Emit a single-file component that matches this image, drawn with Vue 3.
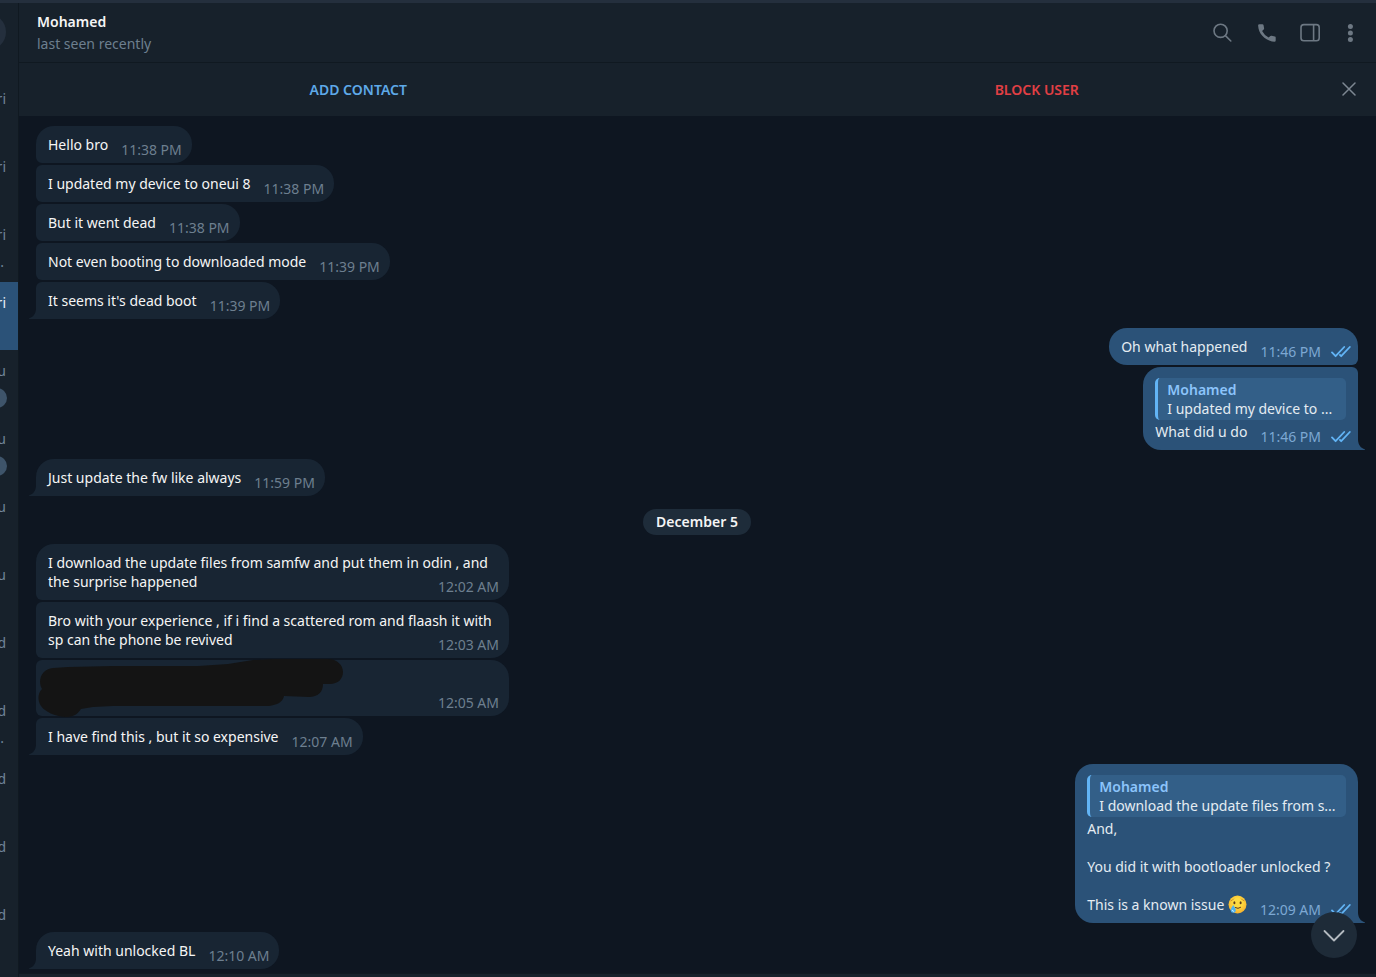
<template>
  <div class="app">
    <aside class="sidebar">
      <div class="sidebar-top">
        <span class="menu-circle"></span>
      </div>
      <div
        v-for="(chat, i) in chats"
        :key="i"
        class="chat-row"
        :class="{ active: chat.active }"
      >
        <span class="chat-day">{{ chat.day }}</span>
        <span v-if="chat.badge" class="chat-badge"></span>
        <span v-else class="chat-preview">{{ chat.preview }}</span>
      </div>
    </aside>

    <main class="chat">
      <header class="header">
        <div class="peer">
          <h1 class="peer-name">Mohamed</h1>
          <p class="peer-status">last seen recently</p>
        </div>
        <div class="tools">
          <button class="icon-btn" aria-label="Search">
            <svg width="20" height="20" viewBox="0 0 20 20" fill="none" stroke="currentColor" stroke-width="1.6" stroke-linecap="round">
              <circle cx="8.6" cy="7.8" r="6.6" />
              <path d="M13.4 12.6L18.8 18" />
            </svg>
          </button>
          <button class="icon-btn" aria-label="Call">
            <svg width="20" height="20" viewBox="-1 0 20 20" fill="currentColor">
              <path d="M2.4 1.2H5.4Q6.3 1.2 6.5 2.1L7.1 5.2Q7.2 5.9 6.7 6.4L5.1 8.1Q7.2 12.2 11.6 14.6L13.4 13Q13.9 12.5 14.6 12.7L17.9 13.5Q18.7 13.7 18.7 14.6V17.4Q18.7 18.7 17.4 18.7C8.6 18.3 1.6 11.4 1.1 2.6Q1.1 1.2 2.4 1.2Z" />
            </svg>
          </button>
          <button class="icon-btn" aria-label="Toggle info panel">
            <svg width="20" height="20" viewBox="0 0 20 20" fill="none" stroke="currentColor" stroke-width="1.6">
              <rect x="1" y="1.6" width="18.2" height="16.2" rx="2.8" />
              <path d="M13.6 1.6V17.8" />
            </svg>
          </button>
          <button class="icon-btn" aria-label="More">
            <svg width="20" height="20" viewBox="0 0 20 20" fill="currentColor">
              <circle cx="10.4" cy="3.4" r="2.5" />
              <circle cx="10.4" cy="10" r="2.5" />
              <circle cx="10.4" cy="16.6" r="2.5" />
            </svg>
          </button>
        </div>
      </header>

      <div class="contact-bar">
        <button class="bar-btn add">ADD CONTACT</button>
        <button class="bar-btn block">BLOCK USER</button>
        <button class="bar-close" aria-label="Close">
          <svg width="14" height="14" viewBox="0 0 14 14" fill="none" stroke="currentColor" stroke-width="1.5" stroke-linecap="round">
            <path d="M1 1L13 13M13 1L1 13" />
          </svg>
        </button>
      </div>

      <section class="history">
        <template v-for="(group, g) in groups" :key="g">
          <div v-if="group.date" class="date">{{ group.date }}</div>
          <div v-else class="group" :class="group.out ? 'out' : 'in'">
            <div v-for="(msg, m) in group.messages" :key="m" class="bubble">
              <div v-if="msg.reply" class="reply">
                <strong class="reply-name">Mohamed</strong>
                <span class="reply-text">{{ msg.reply }}</span>
              </div>
              <div v-if="msg.hidden" class="hidden-text">
                <svg class="scribble" width="306" height="58" viewBox="0 0 306 58" fill="#141414">
                  <path d="M15 9L30 8L75 7H160L190 5L215 1L235 0H290C299 0 305 6 305 13C305 20 300 25 292 25H285C285 33 280 38 271 38L246 37C245 43 239 46 231 47H195L75 47L55 48L43 50C39 56 35 58 27 58C17 57 7 53 3 47C-1 41 0 34 4 30C-1 21 4 10 15 9Z" />
                </svg>
              </div>
              <span class="text">{{ msg.text }}</span>
              <svg v-if="msg.emoji" class="emoji" width="19" height="19" viewBox="0 0 19 19" role="img" aria-label="Smiling face with tear">
                <defs>
                  <radialGradient id="face" cx="0.5" cy="0.4" r="0.6">
                    <stop offset="0.4" stop-color="#fedb41" />
                    <stop offset="1" stop-color="#f7b02c" />
                  </radialGradient>
                </defs>
                <circle cx="9.5" cy="9.5" r="9" fill="url(#face)" />
                <path d="M3 5.8Q4.6 5.4 5.6 4M13.4 4Q14.4 5.4 16 5.8" fill="none" stroke="#b8782a" stroke-width="0.7" stroke-linecap="round" />
                <ellipse cx="6.4" cy="7.7" rx="1" ry="1.5" fill="#5c3a1c" />
                <ellipse cx="12.6" cy="7.7" rx="1" ry="1.5" fill="#5c3a1c" />
                <path d="M7.4 12.6Q10 14.4 12.6 12.4" fill="none" stroke="#5c3a1c" stroke-width="1" stroke-linecap="round" />
                <path d="M5.2 10C6.2 12 7.8 13.2 7.8 15.2A2.5 2.5 0 0 1 2.8 15.2C2.8 13.2 4.4 12 5.2 10Z" fill="#4fb3f2" />
                <path d="M4.2 15.2Q4.4 16.4 5.6 16.4" fill="none" stroke="#d6f1ff" stroke-width="0.9" stroke-linecap="round" />
              </svg>
              <span class="meta">
                <time>{{ msg.time }}</time>
                <svg v-if="group.out" class="checks" width="20" height="12" viewBox="0 0 20 12" fill="none" stroke="currentColor" stroke-width="1.8" stroke-linecap="round" stroke-linejoin="round">
                  <path d="M1 6.4L4.6 10.2L13.2 1" />
                  <path d="M9 9L10.2 10.2L18.8 1" />
                </svg>
              </span>
              <svg v-if="m === group.messages.length - 1" class="tail" width="7" height="10" viewBox="0 0 7 10">
                <path d="M7 0V10H0V9.4C4.4 8 6.6 5 7 0Z" fill="currentColor" />
              </svg>
            </div>
          </div>
        </template>

        <button class="scroll-down" aria-label="Scroll to bottom">
          <svg width="22" height="13" viewBox="0 0 22 13" fill="none" stroke="currentColor" stroke-width="1.8" stroke-linecap="round" stroke-linejoin="round">
            <path d="M1.5 2L11 11.5L20.5 2" />
          </svg>
        </button>
      </section>

      <footer class="composer"></footer>
    </main>
  </div>
</template>

<script setup>
const chats = [
  { day: 'ri' },
  { day: 'ri' },
  { day: 'ri', preview: '.' },
  { day: 'ri', active: true },
  { day: 'u', badge: true },
  { day: 'u', badge: true },
  { day: 'u' },
  { day: 'u' },
  { day: 'd' },
  { day: 'd', preview: '.' },
  { day: 'd' },
  { day: 'd' },
  { day: 'd' }
]

const groups = [
  {
    messages: [
      { text: 'Hello bro', time: '11:38 PM' },
      { text: 'I updated my device to oneui 8', time: '11:38 PM' },
      { text: 'But it went dead', time: '11:38 PM' },
      { text: 'Not even booting to downloaded mode', time: '11:39 PM' },
      { text: "It seems it's dead boot", time: '11:39 PM' }
    ]
  },
  {
    out: true,
    messages: [
      { text: 'Oh what happened', time: '11:46 PM' },
      { reply: 'I updated my device to ...', text: 'What did u do', time: '11:46 PM' }
    ]
  },
  { messages: [{ text: 'Just update the fw like always', time: '11:59 PM' }] },
  { date: 'December 5' },
  {
    messages: [
      {
        text: 'I download the update files from samfw and put them in odin , and the surprise happened',
        time: '12:02 AM'
      },
      {
        text: 'Bro with your experience , if i find a scattered rom and flaash it with sp can the phone be revived',
        time: '12:03 AM'
      },
      { hidden: true, time: '12:05 AM' },
      { text: 'I have find this , but it so expensive', time: '12:07 AM' }
    ]
  },
  {
    out: true,
    messages: [
      {
        reply: 'I download the update files from s...',
        text: 'And,\n\nYou did it with bootloader unlocked ?\n\nThis is a known issue ',
        emoji: true,
        time: '12:09 AM'
      }
    ]
  },
  { messages: [{ text: 'Yeah with unlocked BL', time: '12:10 AM' }] }
]
</script>

<style>
body {
  margin: 0;
  background: #0e1621;
}
</style>

<style scoped>
.app {
  display: flex;
  box-sizing: border-box;
  min-height: 100vh;
  border-top: 3px solid #242f3d;
  background: #17212b;
  color: #f5f5f5;
  font-family: "Noto Sans", sans-serif;
  font-size: 14px;
  line-height: 19px;
}
button {
  border: 0;
  padding: 0;
  background: none;
  font: inherit;
  cursor: pointer;
}

/* sidebar */
.sidebar {
  flex: none;
  width: 18px;
  overflow: hidden;
}
.sidebar-top {
  display: flex;
  align-items: center;
  justify-content: flex-end;
  box-sizing: border-box;
  height: 75px;
  padding: 0 12px 17px 0;
}
.menu-circle {
  flex: none;
  width: 36px;
  height: 36px;
  border-radius: 50%;
  background: #242f3d;
}
.chat-row {
  display: flex;
  flex-direction: column;
  align-items: flex-end;
  gap: 8px;
  box-sizing: border-box;
  height: 68px;
  padding: 11px 12px 0 0;
  color: #708499;
}
.chat-row.active {
  background: #2b5278;
  color: #e9f1f8;
}
.chat-badge {
  width: 22px;
  height: 20px;
  margin-right: -1px;
  border-radius: 10px;
  background: #3e546a;
}
.chat-preview {
  margin-right: 2px;
}

/* header */
.chat {
  display: flex;
  flex: 1;
  flex-direction: column;
  min-width: 0;
  border-left: 1px solid #101921;
}
.header {
  display: flex;
  align-items: center;
  justify-content: space-between;
  height: 59px;
  padding: 0 16px 0 18px;
  border-bottom: 1px solid #101921;
}
.peer-name {
  margin: 0 0 3px;
  font-size: 14px;
  font-weight: 600;
}
.peer-status {
  margin: 0;
  color: #6d7f8f;
}
.tools {
  display: flex;
  align-items: center;
  gap: 24px;
}
.icon-btn {
  display: flex;
  color: #6d7883;
}
.icon-btn:last-child {
  margin-left: -4px;
}
.contact-bar {
  position: relative;
  display: flex;
  height: 53px;
}
.bar-btn {
  flex: 1;
  font-weight: 600;
}
.bar-btn.add {
  color: #5ea9e8;
}
.bar-btn.block {
  color: #e13f44;
}
.bar-close {
  position: absolute;
  top: 0;
  right: 20px;
  display: flex;
  align-items: center;
  height: 52px;
  color: #7d8792;
}

/* messages */
.history {
  position: relative;
  display: flex;
  flex: 1;
  flex-direction: column;
  gap: 9px;
  padding: 10px 18px 4px 17px;
  background: #0e1621;
}
.group {
  display: flex;
  flex-direction: column;
  align-items: flex-start;
  gap: 2px;
}
.group.out {
  align-items: flex-end;
}
.bubble {
  position: relative;
  display: flow-root;
  box-sizing: border-box;
  max-width: 473px;
  padding: 9px 12px;
  border-radius: 6px 18px 18px 6px;
  background: #182533;
}
.bubble:first-child {
  border-top-left-radius: 18px;
}
.bubble:last-child {
  border-bottom-left-radius: 0;
}
.out .bubble {
  border-radius: 18px 6px 6px 18px;
  background: #2b5278;
  color: #e4ecf2;
}
.out .bubble:first-child {
  border-top-right-radius: 18px;
}
.out .bubble:last-child {
  border-bottom-right-radius: 0;
}
.text {
  white-space: pre-wrap;
}
.meta {
  display: flex;
  float: right;
  align-items: center;
  gap: 10px;
  margin: 5px -2px -5px 13px;
  color: #6d7f8f;
  white-space: nowrap;
}
.out .meta {
  margin-right: -5px;
  color: #7da8d3;
}
.checks {
  color: #62b4f5;
}
.tail {
  position: absolute;
  bottom: 0;
  left: -7px;
  color: #182533;
}
.out .tail {
  right: -7px;
  left: auto;
  color: #2b5278;
  transform: scaleX(-1);
}
.reply {
  display: flex;
  flex-direction: column;
  box-sizing: border-box;
  width: 0;
  min-width: 100%;
  margin: 2px 0;
  padding: 2px 0 2px 9px;
  border-left: 3px solid #62b4f5;
  border-radius: 5px;
  background: #335f88;
  white-space: nowrap;
}
.reply-name {
  color: #8cc4fb;
  font-weight: 600;
}
.hidden-text {
  width: 449px;
  height: 19px;
}
.scribble {
  position: absolute;
  top: -1px;
  left: 2px;
}
.emoji {
  vertical-align: -4px;
}
.date {
  align-self: center;
  margin-top: 4px;
  padding: 3px 13px 4px;
  border-radius: 13px;
  background: #1e2c3a;
  font-weight: 600;
}
.scroll-down {
  position: absolute;
  right: 19px;
  bottom: 15px;
  display: flex;
  align-items: center;
  justify-content: center;
  width: 46px;
  height: 46px;
  border-radius: 50%;
  background: #1e2b38;
  color: #b4bac0;
}
.composer {
  height: 3px;
  border-top: 1px solid #101921;
}
</style>
